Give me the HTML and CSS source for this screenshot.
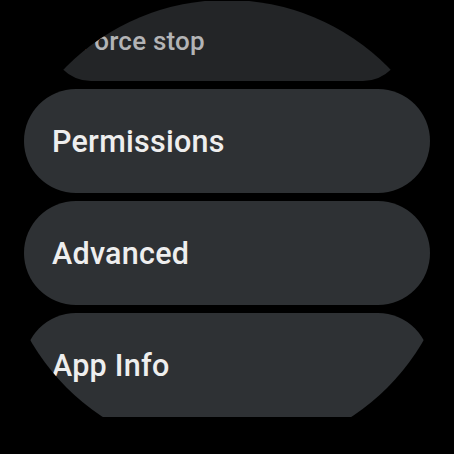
FILE: index.html
```html
<!DOCTYPE html>
<html>
<head>
<meta charset="utf-8">
<link rel="stylesheet" href="styles.css">
</head>
<body>
<div class="screen">
  <div class="list">
    <div class="chip chip-faded"><span class="label">Force stop</span></div>
    <div class="chip"><span class="label">Permissions</span></div>
    <div class="chip"><span class="label">Advanced</span></div>
    <div class="chip"><span class="label">App Info</span></div>
  </div>
</div>
</body>
</html>
```
FILE: styles.css
```css
html, body {
  margin: 0;
  padding: 0;
  background: #000;
}
.screen {
  width: 454px;
  height: 454px;
  border-radius: 50%;
  overflow: hidden;
  background: #000;
}
.list {
  display: flex;
  flex-direction: column;
  align-items: center;
  gap: 8px;
  padding-top: 1px;
}
.chip {
  box-sizing: border-box;
  width: 406px;
  height: 104px;
  border-radius: 52px;
  background: #2e3134;
  display: flex;
  align-items: center;
  padding-left: 28px;
  flex-shrink: 0;
}
.label {
  font-family: Roboto, "Noto Sans", sans-serif;
  font-weight: 500;
  font-size: 30.5px;
  letter-spacing: 0.25px;
  color: #eeeeee;
  white-space: nowrap;
}
.chip-faded {
  width: 352px;
  height: 80px;
  border-radius: 40px;
  background: #232527;
  padding-left: 29px;
}
.chip-faded .label {
  font-size: 26px;
  letter-spacing: 0.2px;
  color: #b3b4b6;
}
```
